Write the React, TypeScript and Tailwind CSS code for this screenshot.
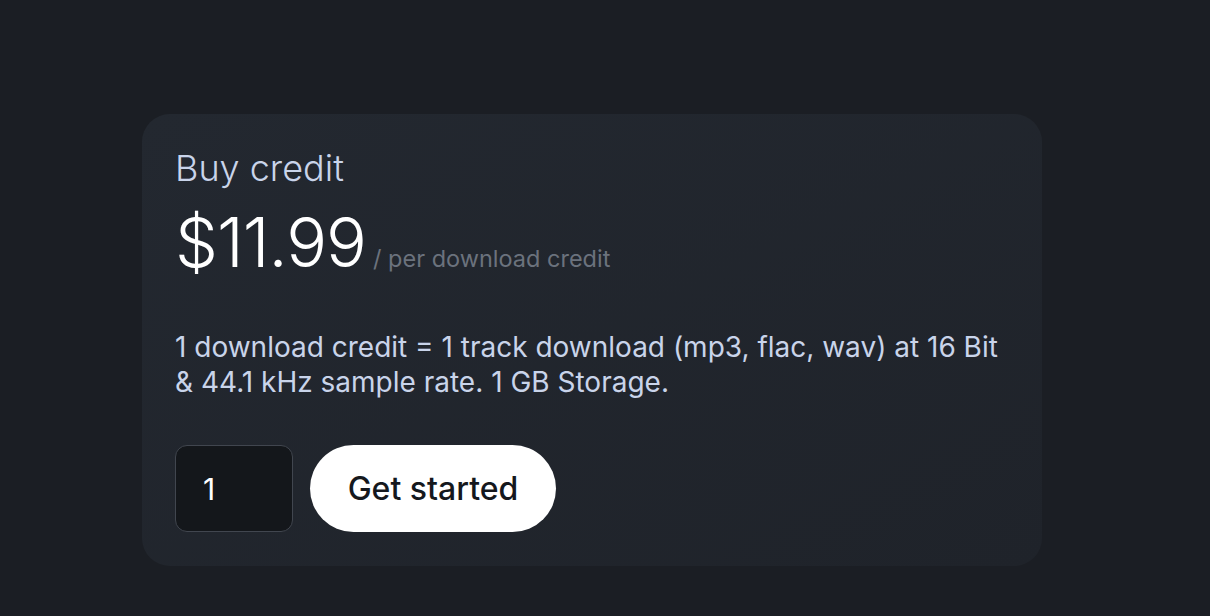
export default function App() {
  return (
    <div className="min-h-[616px] w-full bg-[#1b1e24] font-['Inter',sans-serif] pt-[114px] pl-[142px]">
      <div className="w-[900px] h-[452px] rounded-[28px] bg-gradient-to-br from-[#232830] to-[#1f232a] px-[33px] pt-[30px]">
        <h2 className="text-[36px] leading-[48px] font-light text-[#c9d4ea]">Buy credit</h2>
        <div className="mt-[10px] flex items-baseline gap-[7px]">
          <span className="text-[68px] leading-[80px] font-light text-white tracking-[-1px]">$11.99</span>
          <span className="text-[23.5px] text-[#6b727d]">/ per download credit</span>
        </div>
        <p className="mt-[48px] text-[28px] leading-[35px] text-[#c9d4ea]">
          1 download credit = 1 track download (mp3, flac, wav) at 16 Bit
          <br />& 44.1 kHz sample rate. 1 GB Storage.
        </p>
        <div className="mt-[45px] flex gap-[17px]">
          <input
            defaultValue="1"
            className="w-[118px] h-[87px] rounded-[12px] border border-[#41464f] bg-[#14171b] px-[27px] text-[30px] text-white outline-none"
          />
          <button className="w-[246px] h-[87px] rounded-full bg-white text-[32px] font-medium text-[#15181d]">
            Get started
          </button>
        </div>
      </div>
    </div>
  );
}
